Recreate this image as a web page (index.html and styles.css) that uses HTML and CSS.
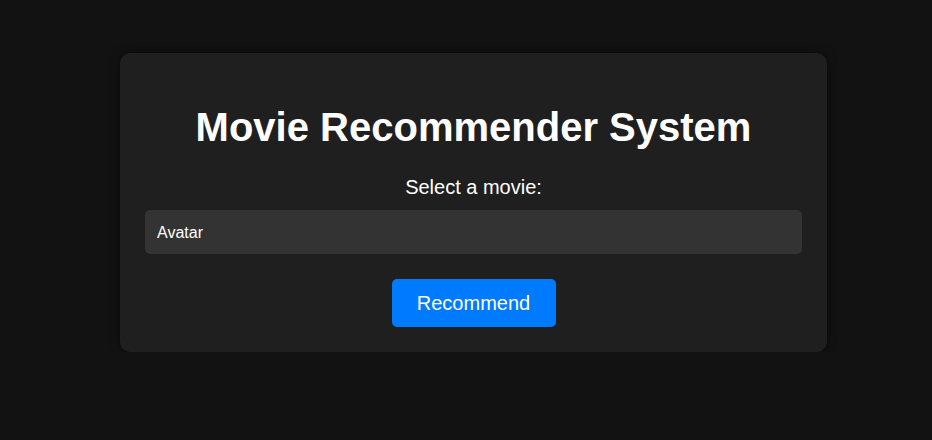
FILE: index.html
```html
<!DOCTYPE html>
<html lang="en">
<head>
    <meta charset="UTF-8">
    <meta name="viewport" content="width=device-width, initial-scale=1.0">
    <title>Movie Recommender System</title>
    <link rel="stylesheet" href="styles.css">
</head>
<body>
    <div class="container">
        <h1 class="title">Movie Recommender System</h1>
        <form class="picker">
            <label for="movie">Select a movie:</label>
            <select id="movie" class="movie-select">
                <option>Avatar</option>
            </select>
            <button type="button" class="btn">Recommend</button>
        </form>
    </div>
</body>
</html>
```

FILE: styles.css
```css
body {
    margin: 0;
    padding: 53px 0 0 120px;
    background-color: #121212;
    color: #fff;
    font-family: "Liberation Sans", Arial, sans-serif;
}

/* card */
.container {
    width: 657px;
    padding: 25px;
    background-color: #1f1f1f;
    border-radius: 10px;
    box-shadow: 0 0 10px rgba(0, 0, 0, 0.5);
    text-align: center;
}

.title {
    font-size: 40px;
    margin: 27px 0 26px;
}

.picker {
    display: flex;
    flex-direction: column;
    align-items: center;
}

.picker label {
    font-size: 20px;
    line-height: 23px;
    margin-bottom: 11px;
}

.movie-select {
    width: 100%;
    height: 44px;
    padding: 0 12px;
    background-color: #333;
    color: #fff;
    border: none;
    border-radius: 5px;
    font-family: inherit;
    font-size: 16px;
    appearance: none;
    -webkit-appearance: none;
}

.btn {
    margin-top: 25px;
    width: 164px;
    height: 48px;
    background-color: #007bff;
    color: #fff;
    border: none;
    border-radius: 5px;
    font-family: inherit;
    font-size: 20px;
    cursor: pointer;
}
```
